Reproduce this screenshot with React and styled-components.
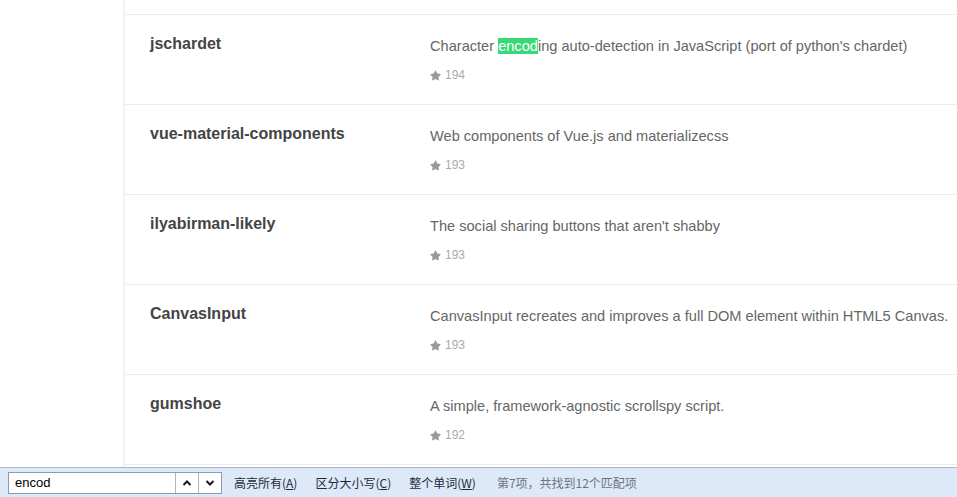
import React from "react";
import styled, { createGlobalStyle } from "styled-components";
import { FaStar } from "react-icons/fa";

const GlobalStyle = createGlobalStyle`
  html, body {
    margin: 0;
    padding: 0;
    height: 100%;
    overflow: hidden;
    background: #fff;
  }
  #root {
    height: 100%;
  }
`;

const Page = styled.div`
  display: flex;
  flex-direction: column;
  height: 497px;
  font-family: "Liberation Sans", Arial, sans-serif;
`;

const Main = styled.div`
  flex: 1;
  display: grid;
  grid-template-columns: 125px 1fr;
  overflow: hidden;
`;

const Sidebar = styled.div`
  border-right: 2px solid #f2f2f2;
`;

const List = styled.div`
  padding-top: 14px;
  min-width: 0;
`;

const Row = styled.div`
  display: grid;
  grid-template-columns: 280px 1fr;
  border-top: 1px solid #ececec;
  padding: 0 0 0 25px;
  box-sizing: border-box;
  height: 90px;
`;

const Name = styled.div`
  font-size: 16px;
  font-weight: bold;
  color: #444;
  line-height: 20px;
  padding-top: 19px;
`;

const Info = styled.div`
  padding-top: 21px;
  white-space: nowrap;
`;

const Desc = styled.div`
  font-size: 14.6px;
  color: #666;
  line-height: 20px;
`;

const Mark = styled.span`
  background: #38d878;
  color: #fff;
`;

const Stars = styled.div`
  display: flex;
  align-items: center;
  gap: 4px;
  margin-top: 11px;
  font-size: 12px;
  color: #aaa;
  line-height: 16px;
  svg {
    width: 11px;
    height: 11px;
    color: #999;
  }
`;

const FindBar = styled.div`
  height: 29px;
  border-top: 1px solid #a9b8c9;
  background: #dde9f8;
  display: flex;
  align-items: center;
  padding-left: 8px;
  font-family: "Noto Sans CJK SC", "Liberation Sans", sans-serif;
  font-size: 12px;
  color: #1e2a3a;
`;

const Search = styled.div`
  display: flex;
  height: 22px;
  margin-top: 1px;
  border: 1px solid #8a9bb0;
  background: #fff;
  box-sizing: border-box;
`;

const SearchInput = styled.div`
  width: 160px;
  padding-left: 6px;
  font-family: "Liberation Sans", Arial, sans-serif;
  font-size: 13px;
  line-height: 20px;
  color: #000;
`;

const Arrow = styled.div`
  width: 22px;
  display: flex;
  align-items: center;
  justify-content: center;
  border-left: 1px solid #aab6c4;
  background: #fff;
  svg {
    width: 10px;
    height: 8px;
  }
`;

const Option = styled.span`
  margin-left: ${(p) => p.gap}px;
  white-space: nowrap;
  u {
    text-decoration: underline;
  }
`;

const Status = styled.span`
  margin-left: 21px;
  color: #6d7480;
  white-space: nowrap;
`;

const repos = [
  {
    name: "jschardet",
    desc: (
      <>
        Character <Mark>encod</Mark>ing auto-detection in JavaScript (port of
        python's chardet)
      </>
    ),
    stars: 194,
  },
  {
    name: "vue-material-components",
    desc: "Web components of Vue.js and materializecss",
    stars: 193,
  },
  {
    name: "ilyabirman-likely",
    desc: "The social sharing buttons that aren't shabby",
    stars: 193,
  },
  {
    name: "CanvasInput",
    desc: "CanvasInput recreates and improves a full DOM element within HTML5 Canvas.",
    stars: 193,
  },
  {
    name: "gumshoe",
    desc: "A simple, framework-agnostic scrollspy script.",
    stars: 192,
  },
  { name: "", desc: "", stars: null },
];

const Chevron = ({ up }) => (
  <svg viewBox="0 0 10 8">
    <path
      d={up ? "M1.5 6 L5 2.5 L8.5 6" : "M1.5 2 L5 5.5 L8.5 2"}
      fill="none"
      stroke="#1a1a1a"
      strokeWidth="2"
    />
  </svg>
);

const App = () => (
  <Page>
    <GlobalStyle />
    <Main>
      <Sidebar />
      <List>
        {repos.map((r, i) => (
          <Row key={i}>
            <Name>{r.name}</Name>
            <Info>
              <Desc>{r.desc}</Desc>
              {r.stars && (
                <Stars>
                  <FaStar />
                  {r.stars}
                </Stars>
              )}
            </Info>
          </Row>
        ))}
      </List>
    </Main>
    <FindBar>
      <Search>
        <SearchInput>encod</SearchInput>
        <Arrow>
          <Chevron up />
        </Arrow>
        <Arrow>
          <Chevron />
        </Arrow>
      </Search>
      <Option gap={12}>
        高亮所有(<u>A</u>)
      </Option>
      <Option gap={18}>
        区分大小写(<u>C</u>)
      </Option>
      <Option gap={18}>
        整个单词(<u>W</u>)
      </Option>
      <Status>第7项，共找到12个匹配项</Status>
    </FindBar>
  </Page>
);

export default App;
